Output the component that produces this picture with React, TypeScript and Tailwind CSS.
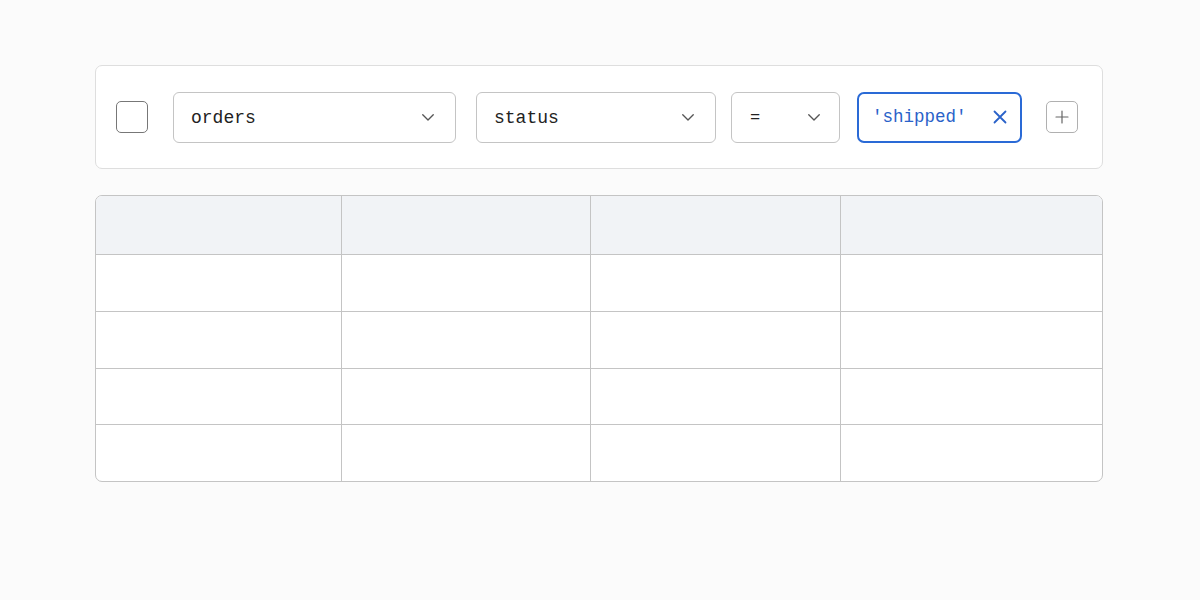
import React from "react";

const Chevron = () => (
  <svg width="18" height="18" viewBox="0 0 24 24" fill="none" stroke="#555" strokeWidth="1.8" strokeLinecap="round" strokeLinejoin="round">
    <path d="M5 9l7 7 7-7" />
  </svg>
);

export default function App() {
  const cols = ["w-[246px]", "w-[249px]", "w-[250px]", "flex-1"];
  const rows = [0, 1, 2, 3];
  return (
    <div className="w-[1200px] h-[600px] bg-[#fbfbfb] pt-[65px] pl-[95px] font-['Liberation_Mono']">
      <div className="w-[1008px] h-[104px] bg-white border border-[#dedede] rounded-[7px] flex items-center pl-[20px]">
        <div className="w-[32px] h-[32px] border-[1.5px] border-[#777] rounded-[5px] bg-white" />
        <div className="ml-[25px] w-[283px] h-[51px] border border-[#c4c4c4] rounded-[6px] flex items-center justify-between pl-[17px] pr-[18px]">
          <span className="pt-[2px] text-[18px] text-[#222]">orders</span>
          <Chevron />
        </div>
        <div className="ml-[20px] w-[240px] h-[51px] border border-[#c4c4c4] rounded-[6px] flex items-center justify-between pl-[17px] pr-[18px]">
          <span className="pt-[2px] text-[18px] text-[#222]">status</span>
          <Chevron />
        </div>
        <div className="ml-[15px] w-[109px] h-[51px] border border-[#c4c4c4] rounded-[6px] flex items-center justify-between pl-[18px] pr-[16px]">
          <span className="pt-[2px] text-[17px] text-[#222]">=</span>
          <Chevron />
        </div>
        <div className="ml-[17px] w-[165px] h-[51px] border-2 border-[#2a6ad6] rounded-[7px] flex items-center justify-between pl-[13px] pr-[12px]">
          <span className="pt-[1px] text-[17.5px] text-[#2a62c9]">'shipped'</span>
          <svg width="16" height="16" viewBox="0 0 16 16" fill="none" stroke="#2a62c9" strokeWidth="1.8" strokeLinecap="round">
            <path d="M2.5 2.5l11 11M13.5 2.5l-11 11" />
          </svg>
        </div>
        <div className="ml-[24px] w-[32px] h-[32px] border border-[#b0b0b0] rounded-[5px] flex items-center justify-center bg-white">
          <svg width="16" height="16" viewBox="0 0 16 16" fill="none" stroke="#666" strokeWidth="1.2" strokeLinecap="round">
            <path d="M8 2v12M2 8h12" />
          </svg>
        </div>
      </div>

      <div className="mt-[26px] w-[1008px] h-[287px] bg-white border border-[#c4c4c4] rounded-[7px] overflow-hidden flex flex-col">
        <div className="h-[59px] bg-[#f1f3f6] flex border-b border-[#c4c4c4]">
          {cols.map((c, i) => (
            <div key={i} className={`${c} h-full ${i < 3 ? "border-r border-[#c4c4c4]" : ""}`} />
          ))}
        </div>
        {rows.map((r) => (
          <div key={r} className={`flex-1 flex ${r < 3 ? "border-b border-[#c4c4c4]" : ""}`}>
            {cols.map((c, i) => (
              <div key={i} className={`${c} h-full ${i < 3 ? "border-r border-[#c4c4c4]" : ""}`} />
            ))}
          </div>
        ))}
      </div>
    </div>
  );
}
